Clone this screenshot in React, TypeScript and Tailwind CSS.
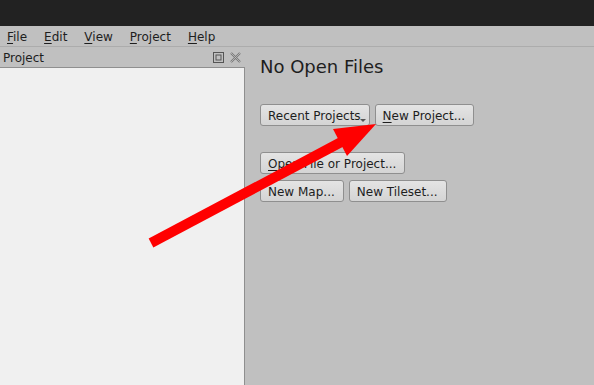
import React from "react";

const font = { fontFamily: '"DejaVu Sans", "Liberation Sans", sans-serif' };

function Mn({ c, rest }: { c: string; rest: string }) {
  return (
    <span>
      <span className="underline underline-offset-2">{c}</span>
      {rest}
    </span>
  );
}

function Btn({ children, drop }: { children: React.ReactNode; drop?: boolean }) {
  return (
    <button className="relative h-[22px] pl-[7px] pr-[8px] pt-[1px] rounded-[3px] border border-[#8f8f8f] bg-gradient-to-b from-[#e4e4e4] to-[#d4d4d4] text-[12px] leading-none text-[#1e1e1e] whitespace-nowrap">
      {children}
      {drop && (
        <span className="absolute right-[3px] bottom-[3px] w-0 h-0 border-l-[3px] border-r-[3px] border-t-[3px] border-l-transparent border-r-transparent border-t-[#555]" />
      )}
    </button>
  );
}

export default function App() {
  return (
    <div className="relative w-[594px] h-[385px] overflow-hidden bg-[#c0c0c0] flex flex-col" style={font}>
      <div className="h-[26px] bg-[#222222] shrink-0" />
      <div className="h-[21px] shrink-0 flex items-center gap-[17px] pl-[7px] pt-[2px] text-[12px] text-[#1e1e1e] border-b border-[#acacac]">
        <Mn c="F" rest="ile" />
        <Mn c="E" rest="dit" />
        <Mn c="V" rest="iew" />
        <Mn c="P" rest="roject" />
        <Mn c="H" rest="elp" />
      </div>
      <div className="flex flex-1 min-h-0">
        <div className="w-[245px] flex flex-col shrink-0">
          <div className="h-[20px] flex items-center justify-between pl-[3px] pr-[4px] pt-[1px] text-[12px] text-[#1e1e1e]">
            <span>Project</span>
            <div className="flex items-center gap-[6px]">
              <svg width="11" height="11" viewBox="0 0 11 11">
                <rect x="0.5" y="0.5" width="10" height="10" fill="none" stroke="#555" />
                <rect x="3" y="3" width="5" height="5" fill="none" stroke="#555" />
              </svg>
              <svg width="11" height="11" viewBox="0 0 11 11">
                <path d="M1 1 L10 10 M10 1 L1 10" stroke="#777" strokeWidth="2.2" />
                <path d="M1 1 L10 10 M10 1 L1 10" stroke="#c0c0c0" strokeWidth="0.8" />
              </svg>
            </div>
          </div>
          <div className="flex-1 bg-[#f0f0f0] border-t border-r border-[#8f8f8f]" />
        </div>
        <div className="flex-1 pl-[15px] pt-[9px] flex flex-col items-start">
          <div className="text-[18px] leading-[21px] text-[#1e1e1e]">No Open Files</div>
          <div className="mt-[27px] flex gap-[5px]">
            <Btn drop>Recent Projects</Btn>
            <Btn>
              <Mn c="N" rest="ew Project..." />
            </Btn>
          </div>
          <div className="mt-[26px] flex">
            <Btn>
              <Mn c="O" rest="pen File or Project..." />
            </Btn>
          </div>
          <div className="mt-[6px] flex gap-[5px]">
            <Btn>New Map...</Btn>
            <Btn>New Tileset...</Btn>
          </div>
        </div>
      </div>
      <svg className="absolute inset-0 pointer-events-none" width="594" height="385">
        <line x1="151" y1="243" x2="345" y2="140" stroke="#ff0000" strokeWidth="10" />
        <polygon points="333,129 376,124 347,156" fill="#ff0000" />
      </svg>
    </div>
  );
}
